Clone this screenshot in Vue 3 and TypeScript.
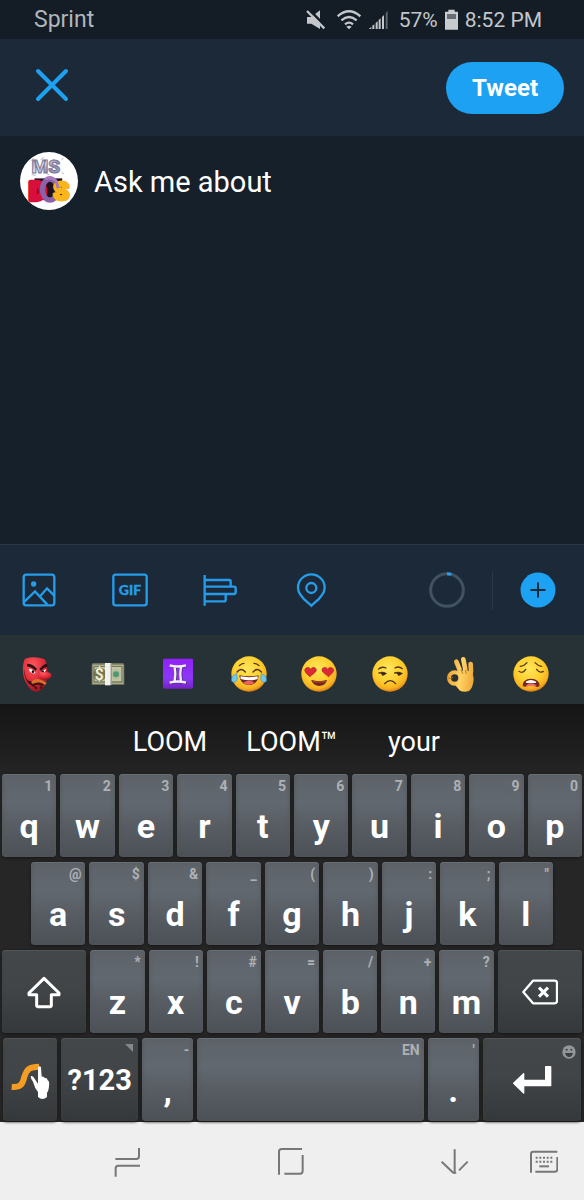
<script setup lang="ts">
import { ref } from 'vue'

interface Key {
  label: string
  hint: string
}

const draft = ref('Ask me about')

const makeRow = (letters: string, hints: string): Key[] =>
  letters.split('').map((label, i) => ({ label, hint: hints[i] }))

const topRow = makeRow('qwertyuiop', '1234567890')
const homeRow = makeRow('asdfghjkl', '@$&_():;"')
const bottomRow = makeRow('zxcvbnm', '*!#=/+?')
const suggestions = ['LOOM', 'LOOM™', 'your']
</script>

<template>
  <main class="screen">
    <header class="status">
      <span class="carrier">Sprint</span>
      <div class="status-right">
        <svg width="24" height="24" viewBox="0 0 72 72" aria-hidden="true">
          <path d="M3 27h13L42 7v56L16 47H3z" fill="#c3c7cb" />
          <path d="M8 4l52 52" stroke="#141d26" stroke-width="8" />
          <path d="M3 9l52 52" stroke="#c3c7cb" stroke-width="7" />
        </svg>
        <svg width="24" height="24" viewBox="0 0 72 72" aria-hidden="true">
          <g fill="none" stroke="#c3c7cb" stroke-width="7">
            <path d="M2 25Q36 -5 70 25" />
            <path d="M13 37Q36 17 59 37" />
            <path d="M24 49Q36 39 48 49" />
          </g>
          <path d="M28 56q8-6 16 0l-8 8z" fill="#c3c7cb" />
        </svg>
        <svg width="24" height="24" viewBox="0 0 72 72" aria-hidden="true">
          <path d="M2 63h8v-6zM13 63h6V49l-6 4zM23 63h6V40l-6 5zM32 63h6V31l-6 5zM42 63h6V21l-6 6z" fill="#c3c7cb" />
          <path d="M53 63h6V9l-6 6z" fill="#5b646c" />
        </svg>
        <span>57%</span>
        <svg width="13" height="24" viewBox="0 0 39 72" aria-hidden="true">
          <path d="M10 5h19v6h10v54H0V11h10z" fill="#c9cccf" />
          <path d="M6 18h27v15H6z" fill="#666d74" />
        </svg>
        <span>8:52 PM</span>
      </div>
    </header>

    <nav class="topbar" aria-label="Compose">
      <button class="close" aria-label="Close">
        <svg width="34" height="34" viewBox="0 0 34 34">
          <path d="M3 3l28 28M31 3L3 31" stroke="#1da1f2" stroke-width="4" stroke-linecap="round" />
        </svg>
      </button>
      <button class="tweet">Tweet</button>
    </nav>

    <section class="composer">
      <svg class="avatar" viewBox="0 0 176 176" role="img" aria-label="MS DOS">
        <defs>
          <linearGradient id="chrome" x2="1" y2="1">
            <stop offset="0" stop-color="#767f9d" /><stop offset=".4" stop-color="#e4e3ef" /><stop offset=".6" stop-color="#9a8cae" /><stop offset="1" stop-color="#8cabd0" />
          </linearGradient>
        </defs>
        <circle cx="88" cy="88" r="88" fill="#fff" />
        <g font-family="Roboto, sans-serif" font-weight="900">
          <text x="35" y="64" font-size="58" fill="url(#chrome)" stroke="#7b7793" stroke-width="3">MS</text>
          <path d="M34 26l8-8M62 24l10-7M92 28l12-6M126 23l6-4M35 68l12 3M82 66l7 4M127 62l7 5" stroke="#8b8ba5" stroke-width="2" />
          <path d="M44 80h84v66H44z" fill="#22101c" />
          <text x="27" y="147" font-size="78" fill="#d80e3c" stroke="#d80e3c" stroke-width="13" stroke-linejoin="round">D</text>
          <ellipse cx="91" cy="114" rx="23" ry="32" fill="none" stroke="#8b62a9" stroke-width="16" />
          <text x="101" y="147" font-size="78" fill="#f9b51b" stroke="#f9b51b" stroke-width="9" stroke-linejoin="round">S</text>
        </g>
        <path d="M76 83q18-13 34 7l6 20" fill="none" stroke="#a87abb" stroke-width="9" />
      </svg>
      <textarea v-model="draft" aria-label="Tweet text" spellcheck="false"></textarea>
    </section>

    <section class="tools">
      <button aria-label="Photo">
        <svg width="36" height="36" viewBox="0 0 108 108" fill="none" stroke="#259deb" stroke-width="7">
          <rect x="8" y="8" width="92" height="92" rx="8" />
          <path d="M8 91l34-33 37 40M56 74l22-25 22 22" />
          <circle cx="38" cy="36" r="8" fill="#259deb" stroke="none" />
        </svg>
      </button>
      <button aria-label="GIF">
        <svg width="36" height="36" viewBox="0 0 108 108">
          <rect x="4" y="8" width="100" height="92" rx="7" fill="none" stroke="#259deb" stroke-width="7" />
          <text x="54" y="69" text-anchor="middle" font-family="Lato, sans-serif" font-weight="900" font-size="42" fill="#259deb" stroke="#259deb" stroke-width="1">GIF</text>
        </svg>
      </button>
      <button aria-label="Poll">
        <svg width="36" height="36" viewBox="0 0 108 108" fill="none" stroke="#259deb" stroke-width="7">
          <path d="M5 9v92M5 24h74q4 0 4 4v16M5 44h88q5 0 5 5v12q0 5-5 5H5M68 66v17q0 5-5 5H5" />
        </svg>
      </button>
      <button aria-label="Location">
        <svg width="36" height="36" viewBox="0 0 108 108" fill="none" stroke="#259deb" stroke-width="7">
          <path d="M52 101C43 91 12 74 12 47a40 40 0 0 1 80 0c0 27-31 44-40 54z" />
          <circle cx="52" cy="48" r="15" />
        </svg>
      </button>
      <svg class="ring" width="38" height="38" viewBox="0 0 114 114" fill="none" stroke-width="9" role="img" aria-label="Character count">
        <circle cx="60" cy="57" r="49" stroke="#40535f" />
        <path d="M60 8a49 49 0 0 1 13 2" stroke="#2c9ced" />
      </svg>
      <span class="divider"></span>
      <button class="add" aria-label="Add tweet">
        <svg width="36" height="36" viewBox="0 0 36 36">
          <circle cx="18" cy="18" r="17.5" fill="#1da1f2" />
          <path d="M18 10.500v15M10.500 18h15" stroke="#1c2938" stroke-width="2" />
        </svg>
      </button>
    </section>

    <section class="emojis">
      <button aria-label="Goblin">
        <svg viewBox="0 0 108 108">
          <defs>
            <radialGradient id="red" cx=".4" cy=".25" r=".8"><stop offset="0" stop-color="#ff5960" /><stop offset=".6" stop-color="#dc2936" /><stop offset="1" stop-color="#8d1521" /></radialGradient>
            <radialGradient id="face" cx=".45" cy=".35" r=".66"><stop offset="0" stop-color="#ffe65c" /><stop offset=".55" stop-color="#ffd02f" /><stop offset=".85" stop-color="#f8b120" /><stop offset="1" stop-color="#d97b16" /></radialGradient>
          </defs>
          <path d="M18 8q28-9 58 1 8 9 9 34c2 35-10 61-31 64-17 1-27-16-36-33C9 55 10 20 18 8z" fill="url(#red)" />
          <path d="M15 40q4 30 13 34 16 2 22 12l-5 8-17-12q-14-20-13-42z" fill="#391218" />
          <path d="M24 23q18 0 30 16l-4 5Q38 34 24 31zM84 23q-13 2-23 17l5 4q8-10 19-12z" fill="#2b1016" />
          <path d="M29 39q13-1 21 12-15 5-21-12zM63 50q7-9 19-10-4 13-19 10z" fill="#fff" />
          <circle cx="42" cy="47" r="4" fill="#111" /><circle cx="71" cy="47" r="4" fill="#111" />
          <ellipse cx="77" cy="59" rx="21" ry="12" fill="url(#red)" />
          <path d="M36 79q12-16 31-7l16 8-4 7-18-8-19 6z" fill="#d9702a" />
          <path d="M43 87q14-9 30 1M48 92l5 6M68 92l-4 6" fill="none" stroke="#471016" stroke-width="7" />
        </svg>
      </button>
      <button aria-label="Banknotes">
        <svg viewBox="0 0 108 108">
          <path d="M5 25l4-4h90l4 4v62H5z" fill="#716f59" />
          <path d="M8 26h92v57H8z" fill="#c4c4a2" />
          <path d="M12 31h84v47H12z" fill="none" stroke="#717c60" stroke-width="4" />
          <circle cx="29" cy="55" r="20" fill="#757455" /><circle cx="78" cy="55" r="16" fill="#b4bf99" /><circle cx="78" cy="55" r="9" fill="#519775" />
          <text x="28" y="71" text-anchor="middle" font-family="Roboto, sans-serif" font-weight="700" font-size="47" fill="#efedcf">$</text>
          <path d="M45 21h17v67H45z" fill="#f2f1ef" />
          <path d="M62 22h4v65h-4z" fill="#9d9b87" />
        </svg>
      </button>
      <button aria-label="Gemini">
        <svg viewBox="0 0 108 108">
          <defs><linearGradient id="violet" x2="0" y2="1"><stop stop-color="#9220f8" /><stop offset=".65" stop-color="#8b38f5" /><stop offset="1" stop-color="#7621c5" /></linearGradient></defs>
          <rect x="9" y="8" width="90" height="90" rx="4" fill="url(#violet)" />
          <path d="M29 28q24 7 49 0M29 80q24-7 49 0M44 31q4 22 0 45M63 31q-4 22 0 45" stroke="#493064" stroke-width="7" fill="none" transform="translate(2 2)" />
          <path d="M29 28q24 7 49 0M29 80q24-7 49 0M44 31q4 22 0 45M63 31q-4 22 0 45" stroke="#f4edff" stroke-width="7" fill="none" />
        </svg>
      </button>
      <button aria-label="Tears of joy">
        <svg viewBox="0 0 108 108">
          <circle cx="54" cy="54" r="53" fill="url(#face)" />
          <path d="M18 48q13-15 25 0M66 48q13-15 25 0M25 29q6-7 14-7M69 22q9 0 15 7" fill="none" stroke="#4c301b" stroke-width="4" stroke-linecap="round" />
          <path d="M25 58q29 6 58 0c-1 39-56 39-58 0z" fill="#6f251c" />
          <path d="M28 61q26 5 52 0v8q-25 8-51 0z" fill="#fff" />
          <path d="M36 80q18-11 35 0-16 13-35 0z" fill="#ed625b" />
          <path d="M17 53C5 57-1 66 3 77q12 5 16-8zM91 53c12 4 18 13 14 24q-12 5-16-8z" fill="#73c7ed" stroke="#4696bd" stroke-width="2" />
        </svg>
      </button>
      <button aria-label="Heart eyes">
        <svg viewBox="0 0 108 108">
          <circle cx="54" cy="54" r="53" fill="url(#face)" />
          <path d="M27 62C15 53 6 43 15 36c7-4 12 0 14 4 4-8 16-8 17 2-1 9-13 13-19 20zM82 62C94 53 103 43 94 36c-7-4-12 0-14 4-4-8-16-8-17 2 1 9 13 13 19 20z" fill="#dd2935" stroke="#ac1d25" stroke-width="2" />
          <path d="M31 72q23 7 47 0c-4 23-41 24-47 0z" fill="#74261c" />
          <path d="M35 76q20 5 39 0" stroke="#a94332" stroke-width="4" fill="none" />
        </svg>
      </button>
      <button aria-label="Unamused">
        <svg viewBox="0 0 108 108">
          <circle cx="54" cy="54" r="53" fill="url(#face)" />
          <path d="M20 39q9-9 22-3M69 36q11-7 22 2M21 51q11-4 21 2M68 51q11-4 22 2M38 83q17-18 33 0" fill="none" stroke="#523319" stroke-width="4" stroke-linecap="round" />
          <path d="M26 51h16q-3 9-11 8zM74 51h15q-2 9-10 8z" fill="#382819" />
        </svg>
      </button>
      <button aria-label="OK hand">
        <svg viewBox="0 0 108 108">
          <defs><linearGradient id="skin" gradientUnits="userSpaceOnUse" x1="14" y1="50" x2="98" y2="60"><stop stop-color="#eda02c" /><stop offset=".5" stop-color="#ffd365" /><stop offset="1" stop-color="#eda534" /></linearGradient></defs>
          <g fill="none" stroke="url(#skin)" stroke-width="14" stroke-linecap="round">
            <path d="M62 64L43 17" /><path d="M72 62Q70 34 64 10" /><path d="M84 66Q89 44 86 24" />
          </g>
          <path d="M52 50q14-10 30-4 14 8 13 25-2 24-14 34-15 5-27-1-8-8-14-16z" fill="url(#skin)" />
          <circle cx="38" cy="66" r="17" fill="#273237" stroke="url(#skin)" stroke-width="12" />
          <path d="M16 66q13 4 17-3M57 40l5 13M71 42l1 11" stroke="#bd741f" stroke-width="3" fill="none" />
        </svg>
      </button>
      <button aria-label="Weary">
        <svg viewBox="0 0 108 108">
          <circle cx="54" cy="54" r="53" fill="url(#face)" />
          <path d="M22 31q13-2 20-11M66 20q8 9 20 11M18 46q11 8 20-6M71 40q9 13 20 6" fill="none" stroke="#5c391b" stroke-width="4" stroke-linecap="round" />
          <path d="M29 89q0-20 25-21 25 1 26 21-8 7-16 1-12-4-20 0-9 5-15-1z" fill="#74281e" />
          <path d="M38 77q15-10 32 0l-2 4H40z" fill="#fff" /><path d="M38 89q16-14 33 0l-3 4q-14-7-29 0z" fill="#ed6e65" />
        </svg>
      </button>
    </section>

    <section class="suggestions">
      <button v-for="word in suggestions" :key="word">{{ word }}</button>
    </section>

    <section class="keyboard" aria-label="Keyboard">
      <div class="row row-top">
        <button v-for="k in topRow" :key="k.label" class="key">
          <span class="hint">{{ k.hint }}</span><span class="letter">{{ k.label }}</span>
        </button>
      </div>
      <div class="row row-home">
        <button v-for="k in homeRow" :key="k.label" class="key">
          <span class="hint">{{ k.hint }}</span><span class="letter">{{ k.label }}</span>
        </button>
      </div>
      <div class="row row-bottom">
        <button class="key dark" aria-label="Shift">
          <svg width="36" height="36" viewBox="0 0 108 108" fill="none" stroke="#fff" stroke-width="9" stroke-linejoin="round">
            <path d="M54 13L9 57v5h23v32q0 4 4 4h36q4 0 4-4V62h23v-5z" />
          </svg>
        </button>
        <button v-for="k in bottomRow" :key="k.label" class="key">
          <span class="hint">{{ k.hint }}</span><span class="letter">{{ k.label }}</span>
        </button>
        <button class="key dark" aria-label="Backspace">
          <svg width="36" height="36" viewBox="0 0 108 108" fill="none" stroke="#fff" stroke-width="7" stroke-linejoin="round">
            <path d="M4 54l29-34h65q7 0 7 7v54q0 7-7 7H33z" />
            <path d="M51 41l27 27M78 41L51 68" stroke-width="9" />
          </svg>
        </button>
      </div>
      <div class="row row-space">
        <button class="key dark" aria-label="Swipe typing">
          <svg width="40" height="40" viewBox="0 0 120 120">
            <path d="M5 81c32 2 32-12 38-30 7-23 16-31 44-31" fill="none" stroke="#f59c22" stroke-width="18" />
            <path d="M84 22q5-6 9 0l2 28q7-2 9 4 8-2 9 7 6 2 4 17-1 16-6 20v13q-14 12-27 0V96q-10-12-15-31-10-15-5-17 5-1 11 10l9 13z" fill="#fff" />
          </svg>
        </button>
        <button class="key dark symbols">
          ?123
          <svg class="corner" width="8" height="8" viewBox="0 0 8 8" aria-hidden="true"><path d="M0 0h8v8z" fill="#84888b" /></svg>
        </button>
        <button class="key"><span class="hint">-</span><span class="letter">,</span></button>
        <button class="key" aria-label="Space"><span class="hint">EN</span></button>
        <button class="key"><span class="hint">'</span><span class="letter">.</span></button>
        <button class="key dark" aria-label="Enter">
          <svg width="40" height="30" viewBox="0 0 120 90" fill="#fff" stroke="#fff" stroke-width="4" stroke-linejoin="round">
            <path d="M5 55l30-29v20h66V5h15v57H35v22z" />
          </svg>
          <svg class="corner smile" width="14" height="14" viewBox="0 0 42 42" aria-hidden="true">
            <circle cx="21" cy="21" r="20" fill="#94979a" /><path d="M9 24h24q-3 12-12 12T9 24z" fill="#3b3f41" /><circle cx="14" cy="14" r="3" fill="#3b3f41" /><circle cx="28" cy="14" r="3" fill="#3b3f41" />
          </svg>
        </button>
      </div>
    </section>

    <nav class="system" aria-label="System">
      <button class="recents" aria-label="Recent apps">
        <svg width="28" height="32" viewBox="0 0 84 96"><path d="M4 42h63q8 0 8-8V9M5 95V70q0-8 8-8h65" /></svg>
      </button>
      <button class="home" aria-label="Home">
        <svg width="28" height="32" viewBox="0 0 84 96"><path d="M3 89V20q0-8 8-8h61M19 86h47q8 0 8-8V30" /></svg>
      </button>
      <button class="back" aria-label="Hide keyboard">
        <svg width="28" height="32" viewBox="0 0 84 96"><path d="M41 13v71M2 50l33 32q5 4 10 0M54 76l26-26" /></svg>
      </button>
      <button aria-label="Choose keyboard">
        <svg width="28" height="32" viewBox="0 0 84 96">
          <path d="M3 83V27q0-7 7-7h72M16 80h59q7 0 7-7V36" />
          <path d="M17 38h52M17 50h52" stroke-dasharray="6 5" /><path d="M28 64h29" />
        </svg>
      </button>
    </nav>
  </main>
</template>

<style>
body {
  margin: 0;
  background: #16202a;
}
</style>

<style scoped>
.screen {
  display: flex;
  flex-direction: column;
  min-height: 100vh;
  font-family: Roboto, "Liberation Sans", sans-serif;
  color: #fff;
}

button {
  display: flex;
  align-items: center;
  justify-content: center;
  padding: 0;
  border: 0;
  background: none;
  color: inherit;
  font: inherit;
}

svg {
  display: block;
  flex: none;
}

.status {
  display: flex;
  align-items: center;
  justify-content: space-between;
  height: 39px;
  padding: 0 42px 0 34px;
  background: #141d26;
  color: #c3c7cb;
  font-size: 21px;
}

.carrier {
  font-size: 23px;
  color: #b0b6bd;
}

.status-right {
  display: flex;
  align-items: center;
  gap: 7px;
}

.topbar {
  display: flex;
  align-items: center;
  justify-content: space-between;
  height: 97px;
  padding: 0 20px 0 35px;
  background: #1c2938;
}

.close {
  margin-bottom: 6px;
}

.tweet {
  height: 52px;
  padding: 0 26px;
  border-radius: 26px;
  background: #1da1f2;
  font-size: 24px;
  font-weight: 700;
}

.composer {
  display: flex;
  flex: 1;
  gap: 16px;
  padding: 16px 20px;
  background: #16202a;
}

.avatar {
  width: 58px;
  height: 58px;
}

textarea {
  flex: 1;
  min-width: 0;
  padding: 12px 0;
  border: 0;
  outline: 0;
  resize: none;
  background: none;
  color: #fff;
  font: 29px/36px Roboto, "Liberation Sans", sans-serif;
}

.tools {
  display: flex;
  align-items: center;
  gap: 27px;
  height: 90px;
  padding: 0 28px 0 21px;
  border-top: 1px solid #2a3845;
  background: #1c2938;
}

.tools button + button {
  margin-left: 28px;
}

.ring {
  margin-left: auto;
}

.divider {
  width: 1px;
  height: 39px;
  background: #2b3947;
}

.emojis {
  display: grid;
  grid-template-columns: repeat(8, 1fr);
  height: 60px;
  padding: 9px 18px 0 2px;
  background: #273237;
}

.emojis svg {
  width: 36px;
  height: 36px;
}

.suggestions {
  display: grid;
  grid-template-columns: repeat(3, 122px);
  justify-content: center;
  height: 70px;
  background: linear-gradient(#151515, #242424);
  font-size: 27px;
}

.suggestions button {
  padding-top: 6px;
}

.keyboard {
  display: grid;
  gap: 5px;
  padding-bottom: 1px;
  background: #262626;
}

.row {
  display: grid;
  gap: 4px;
  height: 83px;
  padding: 0 2px;
}

.row-top {
  grid-template-columns: repeat(10, 1fr);
}

.row-home {
  grid-template-columns: repeat(9, 1fr);
  padding: 0 31px;
}

.row-bottom {
  grid-template-columns: 84fr repeat(7, 54fr) 84fr;
}

.row-space {
  grid-template-columns: 54fr 77fr 51fr 226fr 51fr 98fr;
  padding: 0 3px;
}

.key {
  position: relative;
  flex-direction: column;
  justify-content: flex-start;
  gap: 11px;
  min-width: 0;
  padding-top: 1px;
  border-radius: 4px;
  background: linear-gradient(#5d6369, #62686f 35%, #575c63 65%, #4c5156);
  box-shadow: inset 0 1px 1px #6c7277, inset 0 0 4px #50565b, 0 1px 3px #151515;
}

.dark {
  justify-content: center;
  padding: 0;
  background: linear-gradient(#434749, #414548 45%, #35383a);
  box-shadow: inset 0 1px 1px #54585a, inset 0 0 3px #3d4042, 0 1px 3px #151515;
}

.hint {
  align-self: flex-end;
  height: 20px;
  padding-right: 4px;
  color: #aeb1b4;
  font-size: 14px;
  font-weight: 700;
  line-height: 22px;
}

.letter {
  font-size: 34px;
  font-weight: 700;
  line-height: 40px;
}

.symbols {
  font-size: 29px;
  font-weight: 700;
}

.corner {
  position: absolute;
  top: 6px;
  right: 5px;
}

.smile {
  top: 7px;
}

.system {
  display: flex;
  align-items: center;
  height: 78px;
  padding: 0 26px 0 114px;
  background: #efefef;
}

.system svg {
  fill: none;
  stroke: #777;
  stroke-width: 6;
}

.recents,
.home {
  margin-right: auto;
}

.back {
  margin-right: 61px;
}
</style>
